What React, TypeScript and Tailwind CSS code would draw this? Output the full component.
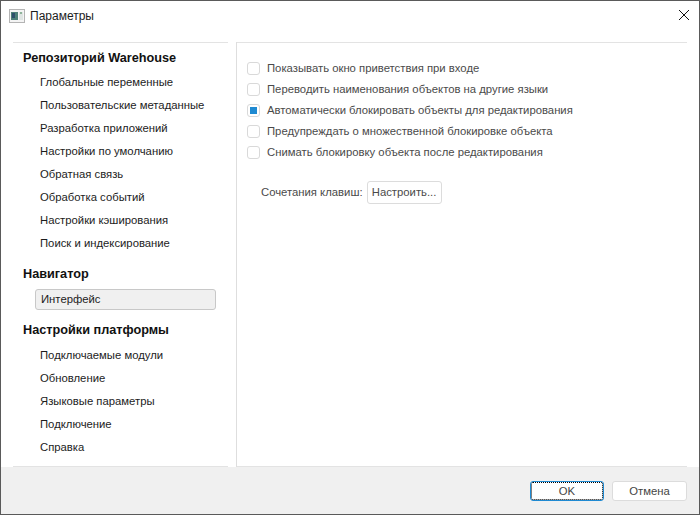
const GROUPS = [
  {
    title: "Репозиторий Warehouse",
    items: [
      "Глобальные переменные",
      "Пользовательские метаданные",
      "Разработка приложений",
      "Настройки по умолчанию",
      "Обратная связь",
      "Обработка событий",
      "Настройки кэширования",
      "Поиск и индексирование",
    ],
  },
  { title: "Навигатор", items: ["Интерфейс"] },
  {
    title: "Настройки платформы",
    items: ["Подключаемые модули", "Обновление", "Языковые параметры", "Подключение", "Справка"],
  },
];

const OPTIONS = [
  { label: "Показывать окно приветствия при входе", checked: false },
  { label: "Переводить наименования объектов на другие языки", checked: false },
  { label: "Автоматически блокировать объекты для редактирования", checked: true },
  { label: "Предупреждать о множественной блокировке объекта", checked: false },
  { label: "Снимать блокировку объекта после редактирования", checked: false },
];

function AppIcon() {
  return (
    <svg width="16" height="14" viewBox="0 0 16 14">
      <rect x="0.5" y="0.5" width="15" height="13" fill="#f4f4f4" stroke="#b4b4b4" />
      <rect x="2" y="3" width="7" height="8" fill="#4d7f78" />
      <rect x="3" y="4" width="3" height="5" fill="#2d4f6b" />
      <rect x="10" y="3" width="4" height="8" fill="#dfe5e3" />
      <rect x="11" y="3" width="2" height="2" fill="#8fb39a" />
    </svg>
  );
}

export default function App() {
  return (
    <div className="w-[700px] h-[515px] flex flex-col bg-white border border-[#5a5a5a] text-[#1c1c1c] text-[11.3px] font-['Liberation_Sans',sans-serif] overflow-hidden">
      <div className="h-[41px] shrink-0 flex items-start pt-[8px] pl-[8px] pr-[10px]">
        <AppIcon />
        <span className="ml-[5px] text-[12px] leading-[15px]">Параметры</span>
        <svg className="ml-auto mt-[1px]" width="10" height="10" viewBox="0 0 10 10">
          <path d="M0 0L10 10M10 0L0 10" stroke="#111" strokeWidth="1" />
        </svg>
      </div>

      <div className="flex-1 flex min-h-0">
        <div className="w-[236px] shrink-0 pl-3 pr-2 border-r border-[#dedede]">
          <div className="h-full border-y border-[#e3e3e3] pt-[6px]">
            {GROUPS.map((g, i) => (
              <div key={g.title} className="mb-[10px]">
                <div className="h-[20px] pl-[10px] flex items-center text-[12.7px] font-bold text-[#111]">{g.title}</div>
                <div className={`flex flex-col ${i === 0 ? "mt-[2px]" : "mt-[3px]"}`}>
                  {g.items.map((item) => (
                    <div key={item} className="h-[23px] flex items-center">
                      <div
                        className={`w-[181px] ml-[22px] h-[21px] pl-[5px] flex items-center rounded-[3px] ${
                          item === "Интерфейс" ? "bg-[#f0f0f0] border border-[#c8c8c8]" : ""
                        }`}
                      >
                        {item}
                      </div>
                    </div>
                  ))}
                </div>
              </div>
            ))}
          </div>
        </div>

        <div className="flex-1 pr-3">
          <div className="h-full border-y border-[#e3e3e3] pl-[10px] pt-[19px]">
            <div className="flex flex-col gap-[8px] text-[#4a4a4a]">
              {OPTIONS.map((o) => (
                <label key={o.label} className="h-[13px] flex items-center">
                  <span className="w-[13px] h-[13px] flex items-center justify-center rounded-[3px] border border-[#d9d9d9] bg-white">
                    {o.checked && <span className="w-[7px] h-[7px] bg-[#1f8ad2]" />}
                  </span>
                  <span className="ml-[7px]">{o.label}</span>
                </label>
              ))}
            </div>
            <div className="flex items-center mt-[22px] ml-[14px] text-[#4a4a4a]">
              <span>Сочетания клавиш:</span>
              <button className="ml-[4px] w-[75px] h-[23px] rounded-[3px] border border-[#dcdcdc] bg-white text-[#4a4a4a]">Настроить...</button>
            </div>
          </div>
        </div>
      </div>

      <div className="h-[47px] shrink-0 bg-[#f0f0f0] flex justify-end items-start pt-[14px] pr-3 gap-2 text-[#444]">
        <button className="w-[74px] h-[20px] bg-white rounded-[3px] border border-[#1f8ad2] outline-1 outline-dotted outline-black -outline-offset-2">OK</button>
        <button className="w-[75px] h-[20px] bg-white rounded-[3px] border border-[#dcdcdc]">Отмена</button>
      </div>
    </div>
  );
}
